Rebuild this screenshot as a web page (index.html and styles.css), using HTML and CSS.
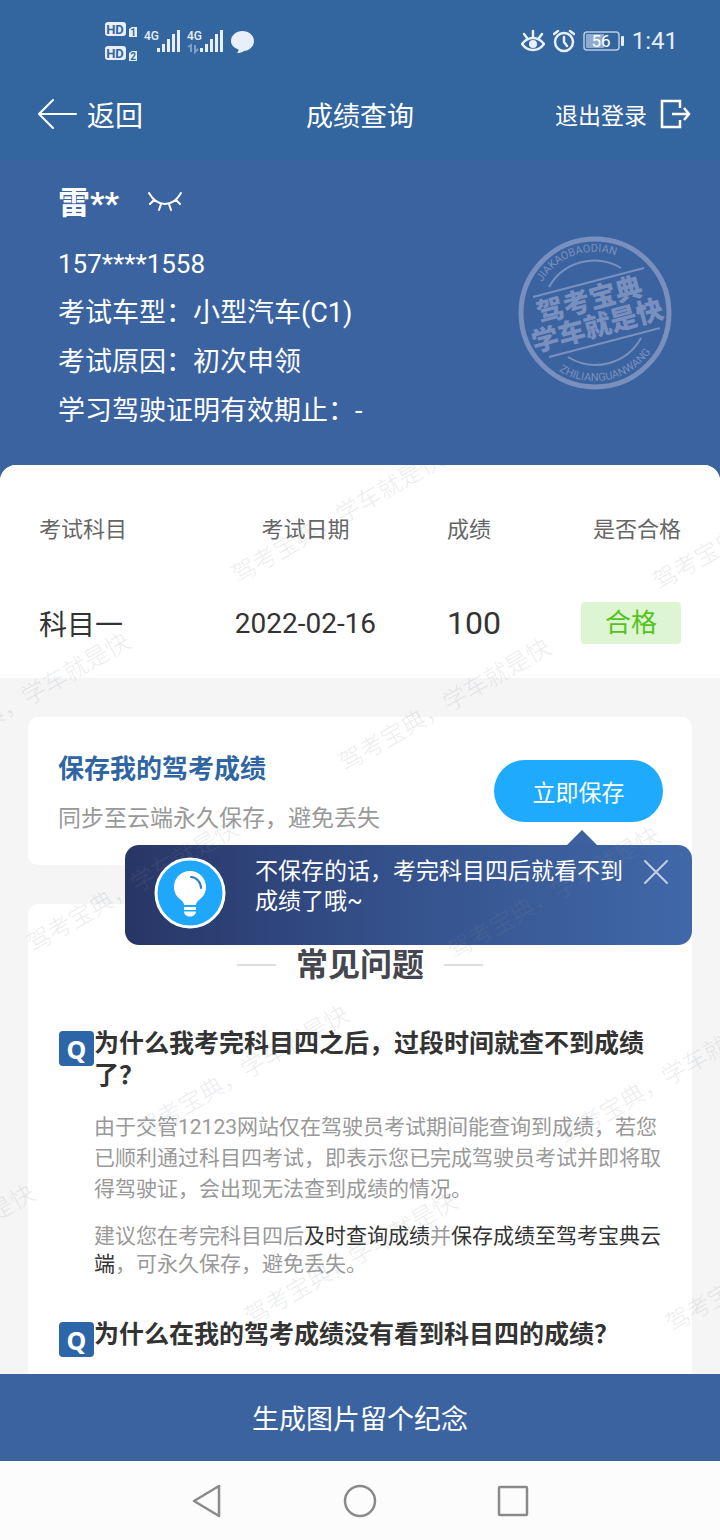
FILE: index.html
```html
<!DOCTYPE html>
<html lang="zh-CN">
<head>
  <meta charset="UTF-8" />
  <meta name="viewport" content="width=device-width, initial-scale=1.0" />
  <title>成绩查询</title>
  <link rel="stylesheet" href="styles.css">
</head>
<body>
  <header class="top">
    <div class="status-bar">
      <svg class="signals" width="150" height="42" viewBox="0 0 150 42">
        <g fill="#e8effa">
          <rect x="0" y="2" width="21" height="14" rx="3" />
          <rect x="0" y="26" width="21" height="14" rx="3" />
          <path d="M24 9l3-2h5v10h-8z" />
          <path d="M24 33l3-2h5v10h-8z" />
          <path d="M52 28h3v4h-3zM57 24h3v8h-3zM62 19h3v13h-3zM67 14h3v18h-3zM72 10h3v22h-3z" />
          <path d="M95 28h3v4h-3zM100 24h3v8h-3zM105 19h3v13h-3zM110 14h3v18h-3zM115 10h3v22h-3z" />
          <path d="M137.500 11c6.500 0 11.500 4.500 11.500 10s-5 10-10 10c-2 1.500-4 2-7 2 1-1 1.500-2 1.500-3.500-4.500-1.500-7.500-4.500-7.500-8.500 0-5.500 5-10 11.500-10z" />
          <text class="net" x="39" y="20">4G</text>
          <text class="net" x="82" y="20">4G</text>
        </g>
        <path d="M83 27l3-2v7M90 25v7l3-3" fill="none" stroke="#7f9fca" stroke-width="2" />
        <g fill="#33659f">
          <text class="hd" x="10" y="14" text-anchor="middle">HD</text>
          <text class="hd" x="10" y="38" text-anchor="middle">HD</text>
          <text class="sim" x="28" y="16" text-anchor="middle">1</text>
          <text class="sim" x="28" y="40" text-anchor="middle">2</text>
        </g>
      </svg>
      <div class="status-right">
        <svg class="eye" width="24" height="24" viewBox="0 0 24 24" fill="none" stroke="#e8effa" stroke-width="2.500" stroke-linecap="round">
          <path d="M1 15c3-4 7-6 11-6s8 2 11 6c-3 4-7 6-11 6s-8-2-11-6z" />
          <path d="M12 8V2M6 9L3 5M18 9l3-4" />
          <circle cx="12" cy="15" r="4" fill="#e8effa" stroke="none" />
        </svg>
        <svg class="alarm" width="22" height="24" viewBox="0 0 22 24" fill="none" stroke="#e8effa" stroke-width="2.500" stroke-linecap="round">
          <circle cx="11" cy="13" r="9" />
          <path d="M11 8v5l3 4M1 5l4-3M21 5l-4-3" />
        </svg>
        <svg width="41" height="22" viewBox="0 0 41 22">
          <rect x="1" y="2" width="35" height="18" rx="3" fill="none" stroke="#b9cae3" stroke-width="1.500" />
          <rect x="3" y="4" width="18" height="14" rx="1" fill="#8fabd0" />
          <rect x="38" y="6" width="3" height="10" rx="1" fill="#e8effa" />
          <text class="battery" x="18" y="17" text-anchor="middle" fill="#fff">56</text>
        </svg>
        <span class="clock">1:41</span>
      </div>
    </div>
    <nav class="nav">
      <a class="back" href="#">
        <svg width="39" height="30" viewBox="0 0 39 30" fill="none" stroke="#fff" stroke-width="2" stroke-linecap="round">
          <path d="M15 1L1 15l14 14M1 15h37" />
        </svg>
        返回
      </a>
      <h1>成绩查询</h1>
      <a class="logout" href="#">
        退出登录
        <svg width="31" height="30" viewBox="0 0 31 30" fill="none" stroke="#fff" stroke-width="2.500">
          <path d="M20 9V2H2v26h18v-7M12 15h17M24 9l5 6-5 6" />
        </svg>
      </a>
    </nav>
  </header>

  <main>
    <section class="profile">
      <div class="info">
        <h2>雷**
          <button class="toggle" aria-label="显示姓名">
            <svg width="36" height="22" viewBox="0 0 36 22" fill="none" stroke="#fff" stroke-width="2" stroke-linecap="round">
              <path d="M2 4c4 7 9 11 16 11s12-4 16-11M7 11l-4 4M14 15l-2 6M22 15l2 6M29 11l4 4" />
            </svg>
          </button>
        </h2>
        <p class="phone">157****1558</p>
        <p>考试车型：小型汽车(C1)</p>
        <p>考试原因：初次申领</p>
        <p>学习驾驶证明有效期止：-</p>
      </div>
      <svg class="stamp" width="154" height="154" viewBox="0 0 154 154">
        <defs>
          <path id="arcTop" d="M24 46A61 61 0 0 1 117 31" />
          <path id="arcBottom" d="M41 135A68 68 0 0 0 140 102" />
        </defs>
        <g fill="none" stroke="#7990bf" stroke-width="2">
          <circle cx="77" cy="77" r="74" stroke-width="5" />
          <path d="M15 61L126 32M31 121L142 92" />
          <path d="M31 51A52 52 0 0 1 103 32M50 121A52 52 0 0 0 123 102" />
        </g>
        <g fill="#7990bf">
          <text class="ring-text"><textPath href="#arcTop">JIAKAOBAODIAN</textPath></text>
          <text class="ring-text"><textPath href="#arcBottom">ZHILIANGUANWANG</textPath></text>
          <text class="stamp-text" text-anchor="middle" transform="translate(74 73) rotate(-15)">驾考宝典</text>
          <text class="stamp-text" text-anchor="middle" transform="translate(82 99) rotate(-15)">学车就是快</text>
        </g>
      </svg>
    </section>

    <div class="content">
      <section class="scores">
        <table>
          <thead>
            <tr>
              <th class="subject">考试科目</th>
              <th class="date">考试日期</th>
              <th class="score">成绩</th>
              <th class="result">是否合格</th>
            </tr>
          </thead>
          <tbody>
            <tr>
              <td class="subject">科目一</td>
              <td class="date">2022-02-16</td>
              <td class="score">100</td>
              <td class="result"><span class="badge">合格</span></td>
            </tr>
          </tbody>
        </table>
      </section>

      <section class="card save">
        <div>
          <h3>保存我的驾考成绩</h3>
          <p>同步至云端永久保存，避免丢失</p>
        </div>
        <button class="save-btn">立即保存</button>

        <div class="tip">
          <svg class="bulb" width="72" height="72" viewBox="0 0 72 72">
            <circle cx="36" cy="36" r="34" fill="#1ea7fb" stroke="#fff" stroke-width="3" />
            <path d="M36 14c-9 0-16 7-16 16 0 6 3 10 7 13 2 2 3 3 3 5h12c0-2 1-3 3-5 4-3 7-7 7-13 0-9-7-16-16-16z" fill="#fff" />
            <path d="M37 20c5 0 10 5 10 11" fill="none" stroke="#2b7fc9" stroke-width="2" stroke-linecap="round" />
            <path d="M30 50h12v3H30zM30 54.500h12c0 3-3 5-6 5s-6-2-6-5z" fill="#fff" />
          </svg>
          <p>不保存的话，考完科目四后就看不到成绩了哦~</p>
          <button class="close" aria-label="关闭">
            <svg width="24" height="24" viewBox="0 0 24 24" stroke="#c3d0e6" stroke-width="2" stroke-linecap="round">
              <path d="M1 1l22 22M23 1L1 23" />
            </svg>
          </button>
        </div>
      </section>

      <section class="card faq">
        <h2>常见问题</h2>
        <article>
          <span class="q">Q</span>
          <div>
            <h3>为什么我考完科目四之后，过段时间就查不到成绩了？</h3>
            <p>由于交管12123网站仅在驾驶员考试期间能查询到成绩，若您已顺利通过科目四考试，即表示您已完成驾驶员考试并即将取得驾驶证，会出现无法查到成绩的情况。</p>
            <p class="advice">建议您在考完科目四后<em>及时查询成绩</em>并<em>保存成绩至驾考宝典云端</em>，可永久保存，避免丢失。</p>
          </div>
        </article>
        <article>
          <span class="q">Q</span>
          <div>
            <h3>为什么在我的驾考成绩没有看到科目四的成绩？</h3>
          </div>
        </article>
      </section>

      <!-- diagonal watermark over the whole content area -->
      <svg class="watermark" width="100%" height="100%" aria-hidden="true">
        <text transform="translate(238 119) rotate(-30)">驾考宝典，学车就是快</text>
        <text transform="translate(659 126) rotate(-30)">驾考宝典，学车就是快</text>
        <text transform="translate(-76 301) rotate(-30)">驾考宝典，学车就是快</text>
        <text transform="translate(345 307) rotate(-30)">驾考宝典，学车就是快</text>
        <text transform="translate(33 488) rotate(-30)">驾考宝典，学车就是快</text>
        <text transform="translate(454 495) rotate(-30)">驾考宝典，学车就是快</text>
        <text transform="translate(143 674) rotate(-30)">驾考宝典，学车就是快</text>
        <text transform="translate(564 681) rotate(-30)">驾考宝典，学车就是快</text>
        <text transform="translate(-171 853) rotate(-30)">驾考宝典，学车就是快</text>
        <text transform="translate(251 861) rotate(-30)">驾考宝典，学车就是快</text>
        <text transform="translate(672 868) rotate(-30)">驾考宝典，学车就是快</text>
      </svg>
    </div>
  </main>

  <button class="make-image">生成图片留个纪念</button>

  <footer class="system-nav">
    <button aria-label="返回键">
      <svg width="34" height="36" viewBox="0 0 34 36" stroke-width="2.500"><path d="M4 18L29 3v30z" /></svg>
    </button>
    <button aria-label="主屏幕">
      <svg width="34" height="36" viewBox="0 0 34 36" stroke-width="2.500"><circle cx="17" cy="18" r="15" /></svg>
    </button>
    <button aria-label="最近任务">
      <svg width="34" height="36" viewBox="0 0 34 36" stroke-width="2.500"><rect x="3" y="4" width="28" height="28" rx="1" /></svg>
    </button>
  </footer>
</body>
</html>
```

FILE: styles.css
```css
* {
  box-sizing: border-box;
}

body {
  font-family: Roboto, 'Noto Sans CJK SC', sans-serif;
  margin: 0;
  min-height: 100vh;
  display: flex;
  flex-direction: column;
  background: #f5f5f5;
  color: #333;
}

h1, h2, h3, p {
  margin: 0;
}

button {
  font-family: inherit;
  border: none;
  padding: 0;
  background: none;
  cursor: pointer;
}

svg {
  display: block;
  flex-shrink: 0;
}

/* header */
.top {
  background: #33659f;
  color: white;
}

.status-bar {
  height: 70px;
  padding: 12px 42px 0 105px;
  display: flex;
  align-items: center;
  justify-content: space-between;
}

.status-right {
  display: flex;
  align-items: center;
  gap: 8px;
}

.clock {
  font-size: 24px;
  line-height: 28px;
  color: #e8effa;
}

.net {
  font-size: 12px;
  font-weight: 500;
}

.hd {
  font-size: 13px;
  font-weight: 700;
}

.sim {
  font-size: 10px;
  font-weight: 700;
}

.battery {
  font-size: 17px;
}

.nav {
  height: 90px;
  padding: 0 29px 2px;
  display: grid;
  grid-template-columns: 1fr auto 1fr;
  align-items: center;
}

.nav h1 {
  font-size: 27px;
  font-weight: 400;
}

.nav a {
  display: flex;
  align-items: center;
  color: white;
  text-decoration: none;
}

.back {
  padding-left: 9px;
  gap: 10px;
  font-size: 28px;
}

.logout {
  justify-content: flex-end;
  gap: 13px;
  font-size: 23px;
}

/* profile */
main {
  flex: 1;
  display: flex;
  flex-direction: column;
  background: #3b63a0;
}

.profile {
  display: flex;
  justify-content: space-between;
  align-items: flex-start;
  padding: 6px 48px 29px 58px;
  color: white;
}

.info h2 {
  display: flex;
  align-items: center;
  gap: 28px;
  height: 68px;
  margin-bottom: 6px;
  font-size: 32px;
  font-weight: 700;
}

.info p {
  font-size: 27px;
  line-height: 49px;
}

.info .phone {
  font-size: 26px;
}

.stamp {
  margin-top: 70px;
}

.ring-text {
  font-size: 11px;
}

.stamp-text {
  font-size: 27px;
  font-weight: 900;
}

.content {
  position: relative;
  flex: 1;
  display: flex;
  flex-direction: column;
  background: #f5f5f5;
  border-radius: 16px 16px 0 0;
  overflow: hidden;
}

/* score table */
.scores {
  background: white;
  padding: 0 39px 21px;
}

.scores table {
  width: 100%;
  border-collapse: collapse;
  table-layout: fixed;
}

.scores th {
  height: 124px;
  padding: 0;
  font-size: 22px;
  font-weight: 400;
  color: #666;
  text-align: left;
}

.scores td {
  height: 68px;
  padding: 0;
  font-size: 28px;
}

.scores .subject {
  width: 26%;
}

.scores .date {
  width: 31%;
  text-align: center;
}

.scores .score {
  width: 20%;
  padding-left: 42px;
}

.scores td.score {
  font-size: 32px;
}

.scores .result {
  text-align: right;
}

.badge {
  display: inline-block;
  padding: 0 24px;
  font-size: 26px;
  line-height: 42px;
  border-radius: 4px;
  background: #def5d3;
  color: #52c41a;
  vertical-align: middle;
}

/* cards */
.card {
  margin: 39px 28px 0;
  background: white;
  border-radius: 10px;
}

.save {
  position: relative;
  display: flex;
  justify-content: space-between;
  align-items: flex-start;
  padding: 27px 29px 21px 30px;
}

.save h3 {
  font-size: 26px;
  line-height: 50px;
  color: #3065a3;
}

.save p {
  font-size: 23px;
  line-height: 50px;
  color: #999;
}

.save-btn {
  width: 169px;
  height: 62px;
  margin-top: 16px;
  border-radius: 31px;
  background: #1eaafd;
  color: white;
  font-size: 23px;
}

.save .tip {
  position: absolute;
  top: 128px;
  right: 0;
  left: 97px;
  height: 100px;
  padding: 12px 24px 0 29px;
  display: flex;
  align-items: flex-start;
  justify-content: space-between;
  border-radius: 14px;
  background: linear-gradient(90deg, #283666, #34508a 45%, #4068a8);
}

.tip::before {
  content: '';
  position: absolute;
  right: 95px;
  bottom: 100%;
  border: 15px solid transparent;
  border-top: none;
  border-bottom-color: #3d61a0;
}

.save .tip p {
  width: 370px;
  margin-left: 10px;
  line-height: 30px;
  color: white;
}

.tip .close {
  margin-top: 3px;
}

/* faq */
.faq {
  flex: 1;
  padding: 38px 0 14px;
  border-radius: 10px 10px 0 0;
}

.faq h2 {
  display: flex;
  align-items: center;
  justify-content: center;
  gap: 20px;
  margin-bottom: 40px;
  font-size: 32px;
  line-height: 46px;
  color: #44474f;
}

.faq h2::before,
.faq h2::after {
  content: '';
  width: 39px;
  height: 2px;
  background: #ddd;
}

.faq article {
  display: flex;
  margin-bottom: 41px;
  padding: 0 22px 0 31px;
}

.faq article:last-child {
  margin-bottom: 0;
}

.q {
  flex: 0 0 35px;
  height: 35px;
  margin-top: 3px;
  border-radius: 4px;
  background: #2c66a8;
  color: white;
  font-family: 'Noto Sans', sans-serif;
  font-size: 25px;
  font-weight: 700;
  line-height: 37px;
  text-align: center;
}

.faq h3 {
  font-size: 25px;
  line-height: 32px;
}

.faq p {
  margin-top: 20px;
  font-size: 21px;
  line-height: 31px;
  color: #999;
}

.faq .advice {
  margin-top: 17px;
  line-height: 28px;
}

.faq em {
  font-style: normal;
  color: #333;
}

.watermark {
  position: absolute;
  inset: 0;
  pointer-events: none;
  font-size: 24px;
  font-weight: 300;
  fill: rgba(130, 140, 150, 0.18);
}

/* bottom */
.make-image {
  height: 87px;
  background: #3b63a0;
  color: white;
  font-size: 27px;
}

.system-nav {
  height: 79px;
  display: flex;
  align-items: center;
  justify-content: center;
  gap: 119px;
  background: #fcfcfc;
}

.system-nav svg {
  fill: none;
  stroke: #8a8a8a;
  stroke-linejoin: round;
}
```
